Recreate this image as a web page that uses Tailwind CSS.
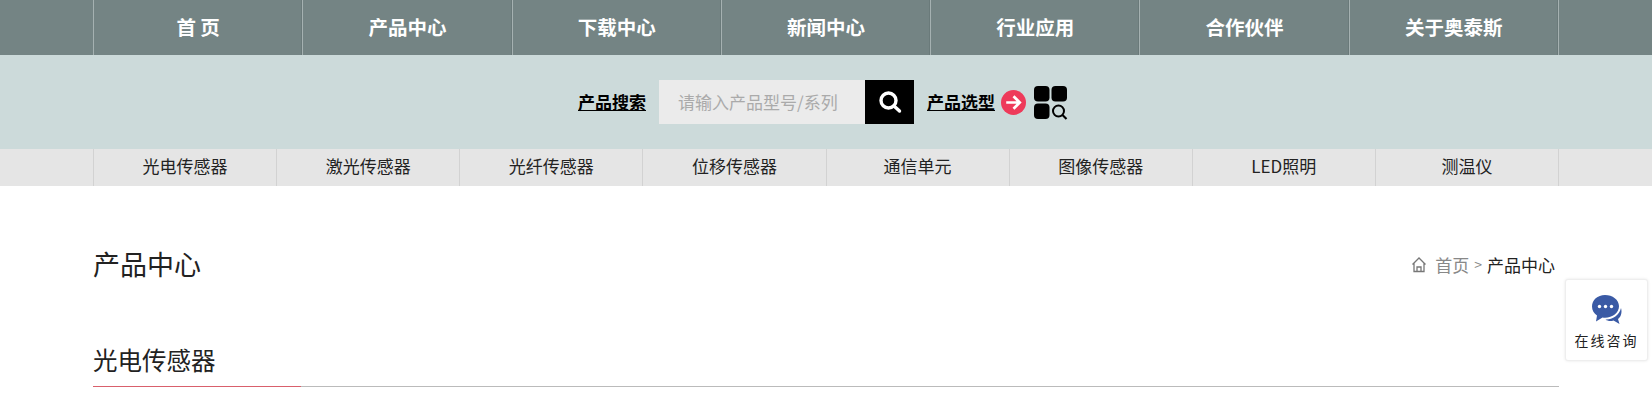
<!DOCTYPE html>
<html lang="zh-CN">

<head>
    <meta charset="UTF-8">
    <title>产品中心</title>
    <script src="https://cdn.jsdelivr.net/npm/@tailwindcss/browser@4"></script>
</head>

<body class="relative h-[402px] overflow-hidden bg-white text-[#222] font-['Noto_Sans_CJK_SC','Liberation_Sans',sans-serif]">
    <!-- main nav -->
    <nav class="h-[55px] bg-[#748484]">
        <ul class="ml-[93px] flex h-full w-[1466px] border-l border-[#a5b1b1] text-[19.5px] font-bold text-white">
            <li class="flex flex-1 items-center justify-center border-r border-[#a5b1b1] pb-[2px] shadow-[inset_-1px_0_0_#6a7a7a]">首 页</li>
            <li class="flex flex-1 items-center justify-center border-r border-[#a5b1b1] pb-[2px] shadow-[inset_-1px_0_0_#6a7a7a]">产品中心</li>
            <li class="flex flex-1 items-center justify-center border-r border-[#a5b1b1] pb-[2px] shadow-[inset_-1px_0_0_#6a7a7a]">下载中心</li>
            <li class="flex flex-1 items-center justify-center border-r border-[#a5b1b1] pb-[2px] shadow-[inset_-1px_0_0_#6a7a7a]">新闻中心</li>
            <li class="flex flex-1 items-center justify-center border-r border-[#a5b1b1] pb-[2px] shadow-[inset_-1px_0_0_#6a7a7a]">行业应用</li>
            <li class="flex flex-1 items-center justify-center border-r border-[#a5b1b1] pb-[2px] shadow-[inset_-1px_0_0_#6a7a7a]">合作伙伴</li>
            <li class="flex flex-1 items-center justify-center border-r border-[#a5b1b1] pb-[2px] shadow-[inset_-1px_0_0_#6a7a7a]">关于奥泰斯</li>
        </ul>
    </nav>

    <!-- search band -->
    <div class="flex h-[94px] items-center bg-[#ccdada] pl-[578px] text-[17px] font-bold text-black">
        <a class="underline">产品搜索</a>
        <div class="ml-[13px] flex h-[44px] w-[206px] items-center bg-[#ebebeb] pl-[19px] text-[17px] font-normal text-[#aaa]">请输入产品型号/系列</div>
        <button class="flex h-[44px] w-[49px] items-center justify-center bg-black">
            <svg class="h-[24px] w-[24px]" viewBox="0 0 24 24" fill="none" stroke="#fff" stroke-width="3.4" stroke-linecap="round">
                <circle cx="10.5" cy="10.5" r="7.5" />
                <path d="M16 16l5.5 5" />
            </svg>
        </button>
        <a class="ml-[13px] underline">产品选型</a>
        <svg class="ml-[6px] h-[25px] w-[25px]" viewBox="0 0 24 24">
            <circle cx="12" cy="12" r="12" fill="#ee3a5a" />
            <path d="M5 12h13M12 6l6 6-6 6" fill="none" stroke="#fff" stroke-width="2.6" />
        </svg>
        <svg class="ml-[8px] mt-[1px] h-[34px] w-[34px]" viewBox="0 0 34 34">
            <rect x="0" y="0" width="15.500" height="15.500" rx="4" fill="#000" />
            <rect x="17.500" y="0" width="15.500" height="15.500" rx="4" fill="#000" />
            <rect x="0" y="17.500" width="15.500" height="15.500" rx="4" fill="#000" />
            <circle cx="24.500" cy="25" r="5.500" fill="none" stroke="#000" stroke-width="2" />
            <path d="M28.500 29l4 4" stroke="#000" stroke-width="2.200" />
        </svg>
    </div>

    <!-- product categories -->
    <div class="h-[37px] bg-[#e5e5e5]">
        <ul class="ml-[93px] flex h-full w-[1466px] border-l border-[#d2d2d2] text-[17px] text-[#222]">
            <li class="flex flex-1 items-center justify-center border-r border-[#d2d2d2] pb-[3px]">光电传感器</li>
            <li class="flex flex-1 items-center justify-center border-r border-[#d2d2d2] pb-[3px]">激光传感器</li>
            <li class="flex flex-1 items-center justify-center border-r border-[#d2d2d2] pb-[3px]">光纤传感器</li>
            <li class="flex flex-1 items-center justify-center border-r border-[#d2d2d2] pb-[3px]">位移传感器</li>
            <li class="flex flex-1 items-center justify-center border-r border-[#d2d2d2] pb-[3px]">通信单元</li>
            <li class="flex flex-1 items-center justify-center border-r border-[#d2d2d2] pb-[3px]">图像传感器</li>
            <li class="flex flex-1 items-center justify-center border-r border-[#d2d2d2] pb-[3px]">LED照明</li>
            <li class="flex flex-1 items-center justify-center border-r border-[#d2d2d2] pb-[3px]">测温仪</li>
        </ul>
    </div>

    <!-- content -->
    <main class="ml-[93px] mt-[35px] w-[1466px]">
        <div class="flex h-[84px] items-center justify-between pt-[3px]">
            <h1 class="text-[27px] font-normal">产品中心</h1>
            <div class="flex items-center pr-[4px] text-[17px] text-[#888]">
                <svg class="mr-[8px] h-[17px] w-[16px]" viewBox="0 0 16 17" fill="none" stroke="#777" stroke-width="1.300">
                    <path d="M1.500 8.500L8 2 14.500 8.500M3 7V15.500h10V7" />
                    <path d="M6 15.500v-4.500h4v4.500" />
                </svg>
                <span>首页</span>
                <span class="mx-[5px] text-[14px]">&gt;</span>
                <span class="text-[#222]">产品中心</span>
            </div>
        </div>
        <div class="relative mt-[36px] h-[46px] border-b border-[#bbb]">
            <h2 class="pt-[2px] text-[24.5px] font-normal leading-[34px]">光电传感器</h2>
            <div class="absolute bottom-[-1px] left-0 h-[1px] w-[208px] bg-[#d9606c]"></div>
        </div>
    </main>

    <!-- floating consult box -->
    <div class="absolute left-[1565px] top-[279px] flex h-[82px] w-[83px] flex-col items-center rounded-[3px] border border-[#eee] bg-white pt-[14px] shadow-[0_0_3px_rgba(0,0,0,0.1)]">
        <svg class="h-[32px] w-[32px]" viewBox="0 0 32 32">
            <path d="M30 14c1.500 5-.5 9.500-3 11l1.500 5-6-3.500c-3 1-6 .5-8-1 6 .5 14-4 15.500-11.500z" fill="#3a5aa5" />
            <path d="M14 1C6.500 1 1 6 1 12.500c0 4 2 7 5 9l-1 6 6.500-4c1 .2 1.800.3 2.500.3 7.500 0 14-5 14-11.500S21.500 1 14 1z" fill="#3a5aa5" />
            <circle cx="8.500" cy="12.500" r="1.700" fill="#fff" />
            <circle cx="14.500" cy="12.500" r="1.700" fill="#fff" />
            <circle cx="20.500" cy="12.500" r="1.700" fill="#fff" />
        </svg>
        <span class="mt-[4px] text-[14px] tracking-[2px] text-[#222]">在线咨询</span>
    </div>
</body>

</html>
